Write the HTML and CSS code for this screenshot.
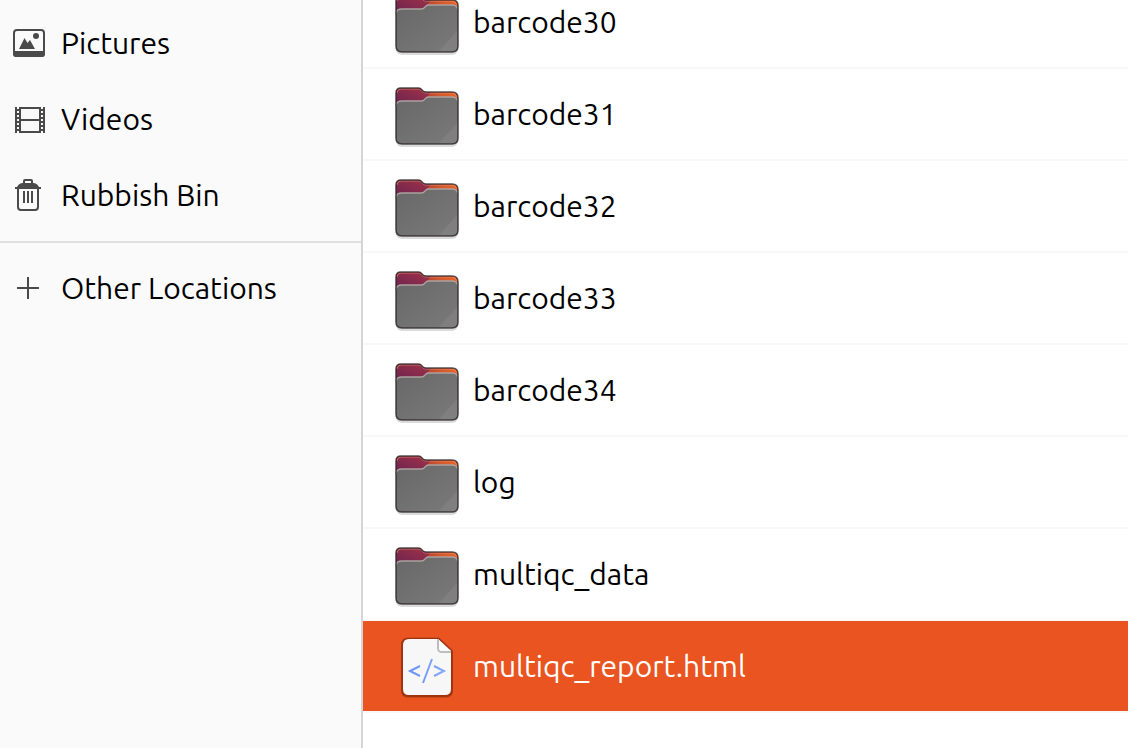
FILE: index.html
```html
<!DOCTYPE html>
<html lang="en">
<head>
<meta charset="utf-8">
<title>Files</title>
<link rel="stylesheet" href="styles.css">
</head>
<body>
<svg class="defs" width="0" height="0" aria-hidden="true">
  <defs>
    <linearGradient id="tab" x1="0" y1="1" x2="1" y2="0">
      <stop offset="0" stop-color="#6d2350"/><stop offset="1" stop-color="#a23348"/>
    </linearGradient>
    <linearGradient id="back" x1="0" y1="0" x2="1" y2="0">
      <stop offset="0.4" stop-color="#a83d3c"/><stop offset="0.75" stop-color="#d65a2c"/><stop offset="1" stop-color="#ec6427"/>
    </linearGradient>
    <linearGradient id="front" x1="0" y1="0" x2="1" y2="1">
      <stop offset="0" stop-color="#686868"/><stop offset="1" stop-color="#7a7a7a"/>
    </linearGradient>
    <linearGradient id="code" x1="0" y1="0" x2="1" y2="0">
      <stop offset="0" stop-color="#6a93f6"/><stop offset="1" stop-color="#86a8fa"/>
    </linearGradient>
    <symbol id="folder" viewBox="0 -3 64 66">
      <rect x="1" y="14" width="62" height="49" rx="6" fill="#000" opacity=".14"/>
      <path d="M1 16V9Q1 4 6 4H23Q25 4 26 5L28 7Q29 8 31 8H57Q63 8 63 14V22H1Z" fill="url(#back)"/>
      <path d="M1 20V9Q1 4 6 4H23Q25 4 26 5L28 7Q29 8 31 8H36L28 18Z" fill="url(#tab)"/>
      <path d="M2 9Q2 5 6 5H23Q25 5 26 6L28 8Q29 9 31 9H57Q61 9 62 13" fill="none" stroke="#f79a70" stroke-opacity=".6"/>
      <path d="M1 23Q1 17 7 17H26Q28 17 29 16L31 14Q32 13 34 13H57Q63 13 63 19V54Q63 60 57 60H7Q1 60 1 54Z" fill="url(#front)"/>
      <path d="M63 38V54Q63 60 57 60H43Z" fill="#fff" opacity=".06"/>
      <path d="M1 22Q1 17 7 17H26Q28 17 29 16L31 14Q32 13 34 13H57Q62 13 63 18" fill="none" stroke="#aaa1a0" stroke-width="1.3"/>
      <path d="M1 9Q1 4 6 4H23Q25 4 26 5L28 7Q29 8 31 8H57Q63 8 63 14V54Q63 60 57 60H7Q1 60 1 54Z" fill="none" stroke="#30272a" stroke-opacity=".8" stroke-width="1.6"/>
    </symbol>
  </defs>
</svg>
<div class="window">
  <nav class="sidebar" aria-label="Places">
    <a class="place" href="#pictures">
      <svg class="place-icon" viewBox="0 0 34 32" aria-hidden="true">
        <rect x="2" y="3" width="30" height="26" rx="3" fill="none" stroke="currentColor" stroke-width="2"/>
        <path d="M1 24H33V27Q33 30 30 30H4Q1 30 1 27ZM7 22L12.500 11L15.500 16L18 13L23 22Z" fill="currentColor"/>
        <circle cx="24" cy="9" r="3" fill="currentColor"/>
      </svg>
      <span>Pictures</span>
    </a>
    <a class="place" href="#videos">
      <svg class="place-icon" viewBox="0 0 34 32" aria-hidden="true" shape-rendering="crispEdges">
        <path d="M8 4V30M28 4V30M8 5H28M8 17H28M8 29H28M4 4V30M32 4V30" fill="none" stroke="currentColor" stroke-width="2"/>
        <path d="M6 6V30M30 6V30" fill="none" stroke="currentColor" stroke-width="2" stroke-dasharray="2 2"/>
      </svg>
      <span>Videos</span>
    </a>
    <a class="place" href="#bin">
      <svg class="place-icon" viewBox="0 0 34 32" aria-hidden="true">
        <path d="M3 8H5Q7 4 11 4V2Q11 0 13 0H19Q21 0 21 2V4Q25 4 27 8H29V10H3ZM13 2V4H19V2Z" fill="currentColor" fill-rule="evenodd"/>
        <path d="M6 9V28Q6 31 9 31H23Q26 31 26 28V9M12 12V24M16 12V24M20 12V24" fill="none" stroke="currentColor" stroke-width="2"/>
      </svg>
      <span>Rubbish Bin</span>
    </a>
    <hr class="divider">
    <a class="place" href="#other">
      <svg class="place-icon" viewBox="0 0 34 32" aria-hidden="true">
        <path d="M5 16H27M16 5V27" fill="none" stroke="currentColor" stroke-width="2"/>
      </svg>
      <span>Other Locations</span>
    </a>
  </nav>
  <main class="files">
    <ul class="file-list">
      <li><a class="file" href="#barcode30"><svg class="file-icon" aria-hidden="true"><use href="#folder"/></svg><span>barcode30</span></a></li>
      <li><a class="file" href="#barcode31"><svg class="file-icon" aria-hidden="true"><use href="#folder"/></svg><span>barcode31</span></a></li>
      <li><a class="file" href="#barcode32"><svg class="file-icon" aria-hidden="true"><use href="#folder"/></svg><span>barcode32</span></a></li>
      <li><a class="file" href="#barcode33"><svg class="file-icon" aria-hidden="true"><use href="#folder"/></svg><span>barcode33</span></a></li>
      <li><a class="file" href="#barcode34"><svg class="file-icon" aria-hidden="true"><use href="#folder"/></svg><span>barcode34</span></a></li>
      <li><a class="file" href="#log"><svg class="file-icon" aria-hidden="true"><use href="#folder"/></svg><span>log</span></a></li>
      <li><a class="file" href="#multiqc_data"><svg class="file-icon" aria-hidden="true"><use href="#folder"/></svg><span>multiqc_data</span></a></li>
      <li><a class="file selected" href="#multiqc_report" aria-current="true">
        <svg class="file-icon" viewBox="0 -3 64 66" aria-hidden="true">
          <path d="M6 9Q6 1 14 1H44L58 14V55Q58 62 51 62H13Q6 62 6 55Z" fill="#8f2f0c" opacity=".3"/>
          <path d="M6 9Q6 2 13 2H44L58 15V54Q58 61 51 61H13Q6 61 6 54Z" fill="#8f2f0c" opacity=".75"/>
          <path d="M8 9Q8 3 14 3H43L56 15V53Q56 59 50 59H14Q8 59 8 53Z" fill="#f7f7f7"/>
          <path d="M43 3V12Q43 16 47 16H56" fill="none" stroke="#bdbdbd" stroke-width="2"/>
          <path d="M44 4V12Q44 15 47 15H56Z" fill="#fafafa"/>
          <path d="M25 30L15 35L25 40M37 23L28 47M39 30L49 35L39 40" fill="none" stroke="url(#code)" stroke-width="2"/>
        </svg><span>multiqc_report.html</span></a></li>
    </ul>
  </main>
</div>
</body>
</html>
```
FILE: styles.css
```css
* {
  box-sizing: border-box;
}

body {
  margin: 0;
  background: #fff;
  color: #000;
  font-family: Ubuntu, "Noto Sans", sans-serif;
  font-size: 30px;
  line-height: 40px;
}

a {
  color: inherit;
  text-decoration: none;
}

.defs {
  position: absolute;
}

.window {
  display: flex;
  height: 100vh;
  overflow: hidden;
}

.sidebar {
  flex: 0 0 363px;
  padding-top: 5px;
  background: #fafafa;
  border-right: 2px solid #d5d5d5;
}

.place {
  display: flex;
  align-items: center;
  gap: 15px;
  height: 76px;
  padding: 0 12px;
}

.place-icon {
  flex: none;
  width: 34px;
  height: 32px;
  color: #4a4a4a;
}

.divider {
  margin: 8px 0 7px;
  border: 0;
  border-top: 2px solid #dfdfdf;
}

.files {
  flex: 1;
  min-width: 0;
  overflow: hidden;
}

.file-list {
  margin: -23px 0 0;
  padding: 0;
  list-style: none;
}

.file {
  display: flex;
  align-items: center;
  gap: 14px;
  height: 92px;
  padding: 0 32px;
  border-bottom: 2px solid #f8f8f8;
}

.file-icon {
  flex: none;
  width: 64px;
  height: 66px;
}

.selected {
  background: #e95420;
  background-clip: padding-box;
  color: #fff;
}
```
